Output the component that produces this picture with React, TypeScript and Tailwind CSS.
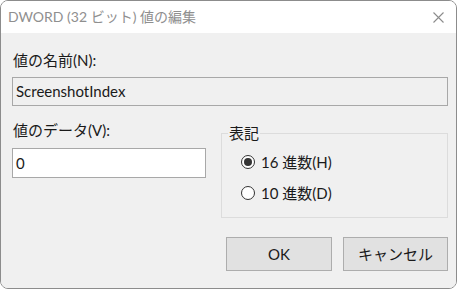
import React from 'react';

const font = 'Lato, "Noto Sans CJK JP", sans-serif';

function Radio({ checked, label }: { checked?: boolean; label: string }) {
  return (
    <div className="flex items-center gap-[6px] h-[20px]">
      <span className="w-[14px] h-[14px] rounded-full border border-[#333333] bg-white flex items-center justify-center">
        {checked && <span className="w-[8px] h-[8px] rounded-full bg-[#333333]" />}
      </span>
      <span className="text-[15px] leading-[20px] text-[#1a1a1a]">{label}</span>
    </div>
  );
}

export default function App() {
  return (
    <div className="w-[460px] h-[290px] bg-white" style={{ fontFamily: font }}>
      <div className="w-[457px] h-[289px] border border-[#8c8c8c] rounded-[8px] overflow-hidden flex flex-col">
        {/* Title bar */}
        <div className="h-[32px] bg-white flex items-center justify-between pl-[7px] pr-[12px] shrink-0">
          <span className="text-[14px] text-[#8f8f8f] leading-[20px]">DWORD (32 ビット) 値の編集</span>
          <svg width="11" height="11" viewBox="0 0 11 11" className="mt-[1px]">
            <path d="M0.5 0.5 L10.5 10.5 M10.5 0.5 L0.5 10.5" stroke="#8c8c8c" strokeWidth="1.1" fill="none" />
          </svg>
        </div>

        {/* Body */}
        <div className="flex-1 bg-[#f0f0f0] pl-[11px] pr-[8px] pt-[17px] text-[#1a1a1a]">
          <div className="text-[15px] leading-[20px] ml-[1px]">値の名前(N):</div>
          <div className="mt-[7px] h-[29px] border border-[#a8a8a8] bg-[#f0f0f0] flex items-center px-[3px] text-[15px]">
            ScreenshotIndex
          </div>

          <div className="flex items-start mt-[14px]">
            <div className="w-[194px] shrink-0">
              <div className="text-[15px] leading-[20px] ml-[1px]">値のデータ(V):</div>
              <div className="mt-[8px] h-[30px] border border-[#a8a8a8] bg-white flex items-center px-[3px] text-[15px]">
                0
              </div>
            </div>
            <fieldset className="ml-[15px] mt-[3px] w-[227px] h-[95px] border border-[#dcdcdc] px-[19px]">
              <legend className="text-[15px] leading-[20px] px-[1px] -ml-[13px]">表記</legend>
              <div className="flex flex-col gap-[11px] mt-[9px]">
                <Radio checked label="16 進数(H)" />
                <Radio label="10 進数(D)" />
              </div>
            </fieldset>
          </div>

          <div className="flex justify-end gap-[11px] mt-[19px]">
            <button className="w-[106px] h-[34px] bg-[#e1e1e1] border border-[#adadad] text-[15px] text-[#1a1a1a]">
              OK
            </button>
            <button className="w-[105px] h-[34px] bg-[#e1e1e1] border border-[#adadad] text-[15px] text-[#1a1a1a]">
              キャンセル
            </button>
          </div>
        </div>
      </div>
    </div>
  );
}
